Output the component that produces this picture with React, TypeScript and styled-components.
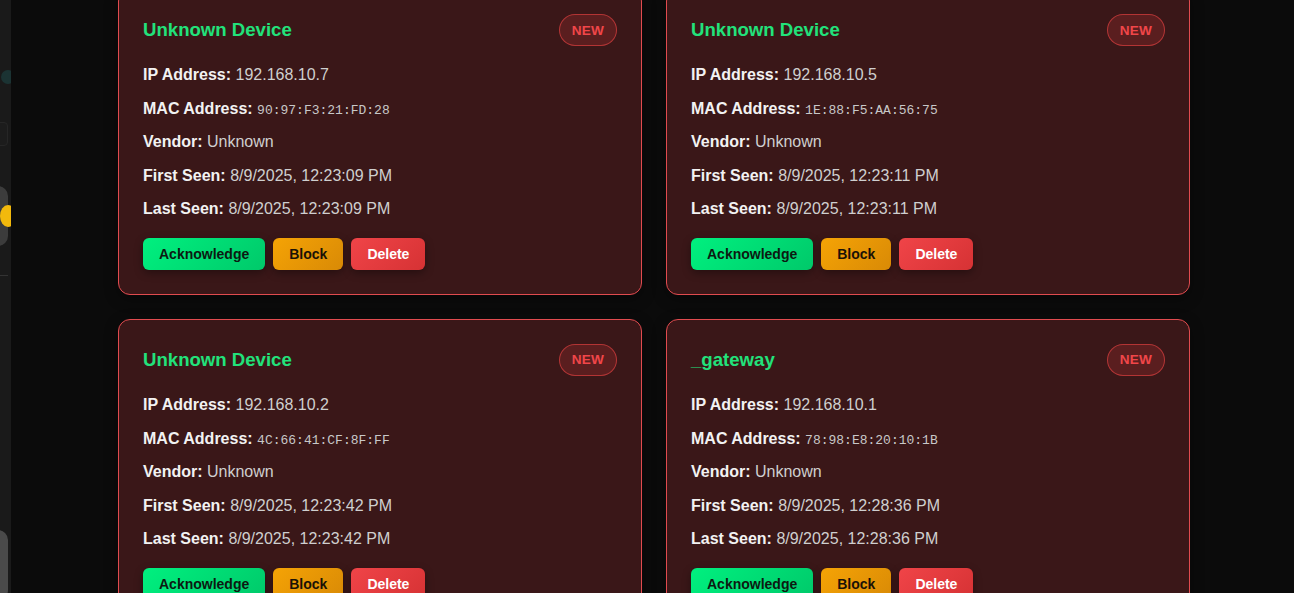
import styled, { createGlobalStyle } from "styled-components";

const GlobalStyle = createGlobalStyle`
  html, body {
    margin: 0;
    padding: 0;
    background: #0b0b0b;
    height: 100%;
    overflow: hidden;
  }
  #root {
    height: 100%;
  }
  * {
    box-sizing: border-box;
  }
`;

type Device = {
  name: string;
  ip: string;
  mac: string;
  vendor: string;
  firstSeen: string;
  lastSeen: string;
};

const devices: Device[] = [
  {
    name: "Unknown Device",
    ip: "192.168.10.7",
    mac: "90:97:F3:21:FD:28",
    vendor: "Unknown",
    firstSeen: "8/9/2025, 12:23:09 PM",
    lastSeen: "8/9/2025, 12:23:09 PM",
  },
  {
    name: "Unknown Device",
    ip: "192.168.10.5",
    mac: "1E:88:F5:AA:56:75",
    vendor: "Unknown",
    firstSeen: "8/9/2025, 12:23:11 PM",
    lastSeen: "8/9/2025, 12:23:11 PM",
  },
  {
    name: "Unknown Device",
    ip: "192.168.10.2",
    mac: "4C:66:41:CF:8F:FF",
    vendor: "Unknown",
    firstSeen: "8/9/2025, 12:23:42 PM",
    lastSeen: "8/9/2025, 12:23:42 PM",
  },
  {
    name: "_gateway",
    ip: "192.168.10.1",
    mac: "78:98:E8:20:10:1B",
    vendor: "Unknown",
    firstSeen: "8/9/2025, 12:28:36 PM",
    lastSeen: "8/9/2025, 12:28:36 PM",
  },
];

const Shell = styled.div`
  display: flex;
  height: 100%;
  font-family: "Liberation Sans", Arial, sans-serif;
`;

const Sidebar = styled.aside`
  width: 11px;
  flex-shrink: 0;
  background: #1a1a1a;
  overflow: hidden;
`;

const SideInner = styled.div`
  width: 60px;
  margin-left: -52px;
  display: flex;
  flex-direction: column;
  align-items: stretch;
  padding-top: 70px;
`;

const SideDot = styled.div`
  width: 14px;
  height: 14px;
  border-radius: 50%;
  background: #1b3333;
  align-self: flex-end;
  margin-right: -7px;
`;

const SideField = styled.div`
  height: 24px;
  margin-top: 38px;
  border: 1px solid #262626;
  border-radius: 4px;
  background: #1c1c1c;
`;

const SideToggle = styled.div`
  height: 60px;
  margin-top: 40px;
  border-radius: 10px;
  background: #3c3c3c;
  display: flex;
  align-items: center;
  justify-content: flex-end;
`;

const SideKnob = styled.div`
  width: 16px;
  height: 22px;
  border-radius: 50%;
  background: #f2b90c;
  margin-right: -8px;
`;

const SideRule = styled.div`
  height: 1px;
  margin-top: 29px;
  background: #333333;
`;

const SideFooter = styled.div`
  height: 70px;
  margin-top: 254px;
  border-radius: 10px;
  background: #4a4a4a;
`;

const Main = styled.main`
  flex: 1;
  padding-left: 107px;
`;

const Grid = styled.div`
  display: grid;
  grid-template-columns: 524px 524px;
  gap: 24px;
  margin-top: -11px;
`;

const Card = styled.div`
  background: #3a1718;
  border: 1px solid #e14b4f;
  border-radius: 12px;
  padding: 24px;
  box-shadow: 0 4px 14px rgba(0, 0, 0, 0.35);
`;

const Header = styled.div`
  display: flex;
  align-items: center;
  justify-content: space-between;
  height: 32px;
  margin-bottom: 16px;
`;

const Title = styled.h3`
  margin: 0;
  font-size: 18.6px;
  font-weight: 700;
  color: #22e27b;
`;

const Badge = styled.span`
  display: inline-flex;
  align-items: center;
  height: 32px;
  padding: 0 12px;
  border-radius: 999px;
  border: 1px solid rgba(239, 68, 68, 0.6);
  background: rgba(239, 68, 68, 0.18);
  color: #f04649;
  font-size: 13.6px;
  font-weight: 700;
  letter-spacing: 0.2px;
`;

const Info = styled.div`
  display: grid;
  row-gap: 8px;
`;

const Line = styled.p`
  margin: 0;
  font-size: 16px;
  line-height: 25.6px;
  height: 25.6px;
  color: #cfcfcf;
`;

const Label = styled.strong`
  color: #f2f2f2;
  font-weight: 700;
`;

const Mono = styled.span`
  font-family: "Liberation Mono", "DejaVu Sans Mono", monospace;
  font-size: 13px;
  line-height: 1;
  color: #c8c8c8;
`;

const Actions = styled.div`
  display: flex;
  gap: 8px;
  margin-top: 16px;
`;

type Tone = "ack" | "block" | "delete";

const tones: Record<Tone, { bg: string; fg: string }> = {
  ack: { bg: "linear-gradient(135deg, #00f07f, #00c96a)", fg: "#0c1a12" },
  block: { bg: "linear-gradient(135deg, #f5a305, #d98a06)", fg: "#1a1206" },
  delete: { bg: "linear-gradient(135deg, #f04448, #d63234)", fg: "#ffffff" },
};

const ActionButton = styled.button<{ $tone: Tone }>`
  height: 32px;
  padding: 0 16px;
  border: none;
  border-radius: 6px;
  font-family: "Liberation Sans", Arial, sans-serif;
  font-size: 14px;
  font-weight: 700;
  cursor: pointer;
  background: ${({ $tone }) => tones[$tone].bg};
  color: ${({ $tone }) => tones[$tone].fg};
  box-shadow: 0 3px 8px rgba(0, 0, 0, 0.35);
`;

function DeviceCard({ device }: { device: Device }) {
  return (
    <Card>
      <Header>
        <Title>{device.name}</Title>
        <Badge>NEW</Badge>
      </Header>
      <Info>
        <Line>
          <Label>IP Address:</Label> {device.ip}
        </Line>
        <Line>
          <Label>MAC Address:</Label> <Mono>{device.mac}</Mono>
        </Line>
        <Line>
          <Label>Vendor:</Label> {device.vendor}
        </Line>
        <Line>
          <Label>First Seen:</Label> {device.firstSeen}
        </Line>
        <Line>
          <Label>Last Seen:</Label> {device.lastSeen}
        </Line>
      </Info>
      <Actions>
        <ActionButton $tone="ack">Acknowledge</ActionButton>
        <ActionButton $tone="block">Block</ActionButton>
        <ActionButton $tone="delete">Delete</ActionButton>
      </Actions>
    </Card>
  );
}

export default function App() {
  return (
    <>
      <GlobalStyle />
      <Shell>
        <Sidebar>
          <SideInner>
            <SideDot />
            <SideField />
            <SideToggle>
              <SideKnob />
            </SideToggle>
            <SideRule />
            <SideFooter />
          </SideInner>
        </Sidebar>
        <Main>
          <Grid>
            {devices.map((d, i) => (
              <DeviceCard key={i} device={d} />
            ))}
          </Grid>
        </Main>
      </Shell>
    </>
  );
}
